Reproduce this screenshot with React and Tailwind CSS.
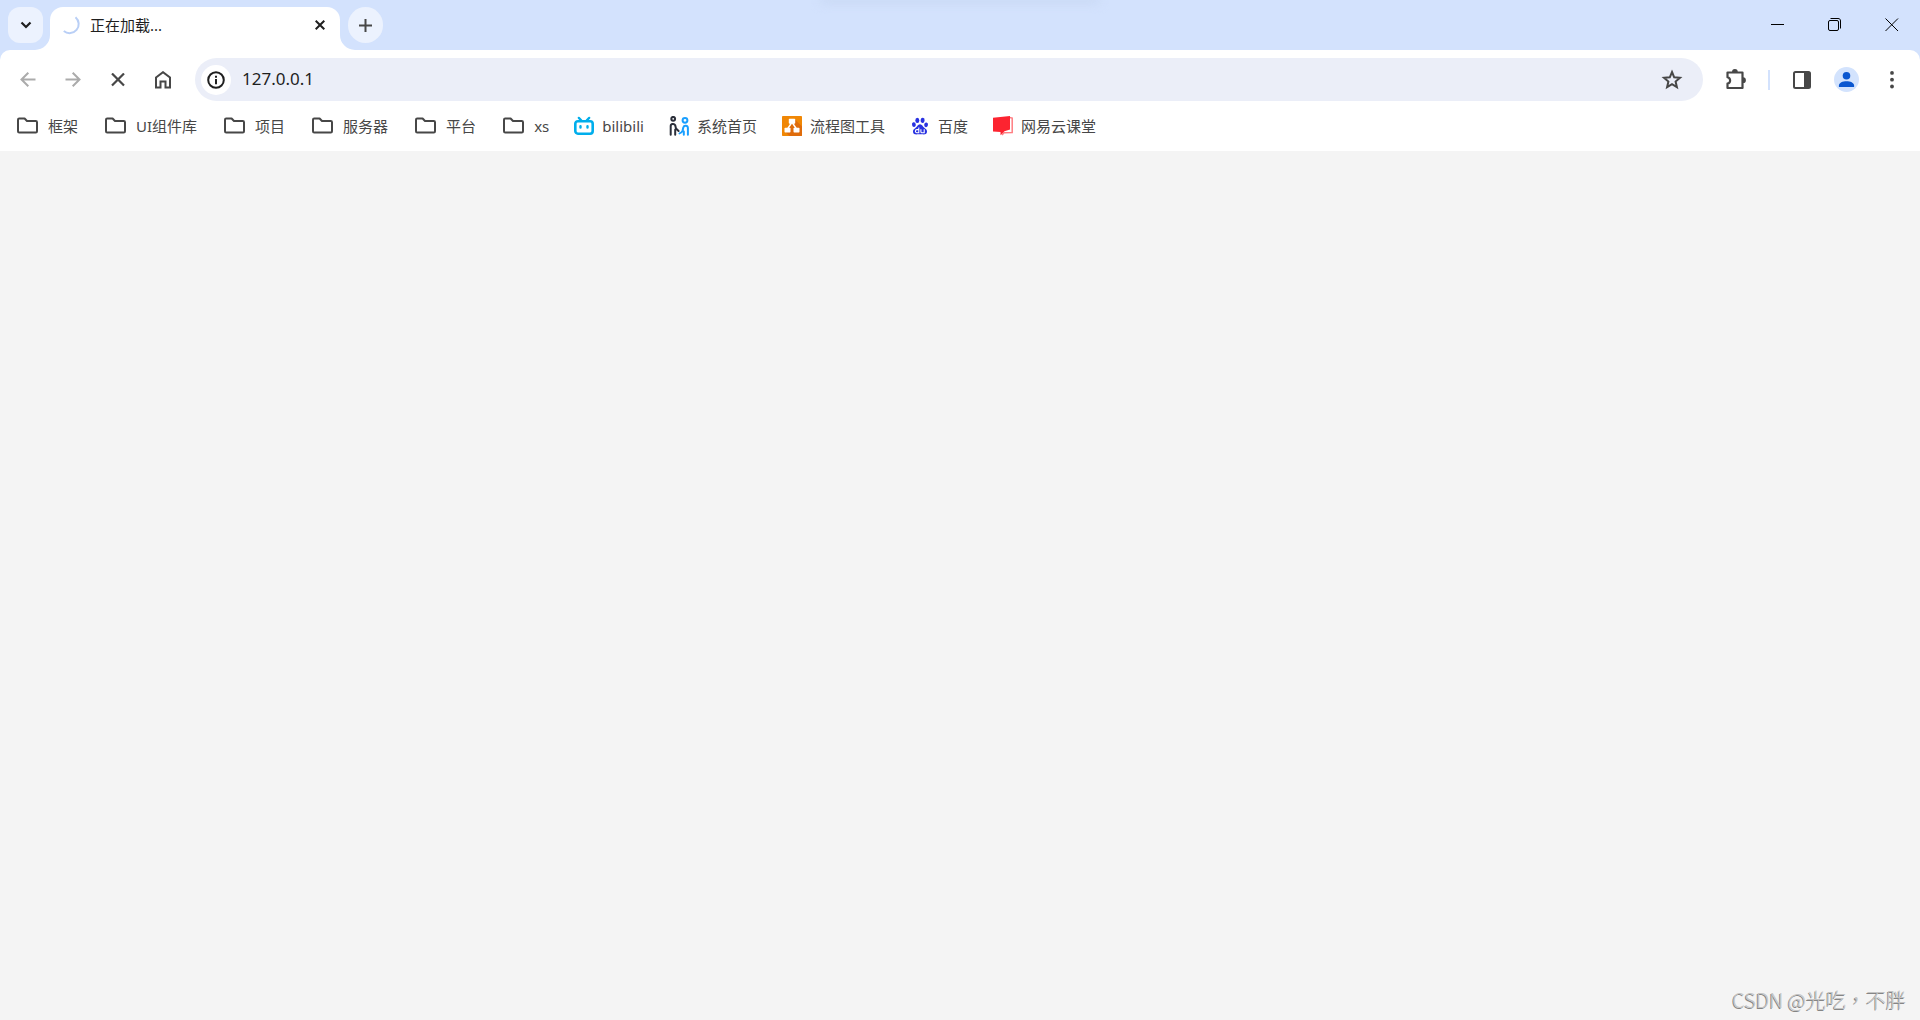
import { useState } from 'react';

const FolderIcon = () => (
  <svg className="size-[25px] shrink-0" viewBox="0 0 25 25" fill="none" stroke="#474747" strokeWidth="2" strokeLinejoin="round" aria-hidden="true">
    <path d="M3 5.700C3 5 3.500 4.500 4.200 4.500H9.600L12 7H20.800C21.500 7 22 7.500 22 8.200V17.300C22 18 21.500 18.500 20.800 18.500H4.200C3.500 18.500 3 18 3 17.300Z" />
  </svg>
);

const BilibiliIcon = () => (
  <svg className="size-5 shrink-0" viewBox="0 0 20 20" fill="none" stroke="#00aeec" strokeLinecap="round" aria-hidden="true">
    <path d="M4.800 1.900L7.200 4.300M15.200 1.900L12.800 4.300" strokeWidth="2.300" />
    <rect x="1.300" y="5.200" width="17.400" height="12.500" rx="2.600" strokeWidth="2.600" />
    <path d="M6.500 10.200V11.600M13.500 10.200V11.600" strokeWidth="2.400" />
  </svg>
);

const PeopleIcon = () => (
  <svg className="size-5 shrink-0" viewBox="0 0 20 20" fill="none" strokeWidth="2" strokeLinecap="round" strokeLinejoin="round" aria-hidden="true">
    <g stroke="#2b2f3a">
      <circle cx="4.200" cy="2.800" r="1.900" />
      <path d="M1.700 18.800V10C1.700 7.600 5.200 7.200 6.200 9.200L7 12.500L9.600 15M6.200 13.500V18.800" />
    </g>
    <g stroke="#1a9fff">
      <circle cx="16" cy="4.300" r="2.400" />
      <path d="M18.900 18.800V12C18.900 9.300 15 9 14.300 11.500L13.600 14.500C13 16.200 11.900 17 10.500 17.400M14.800 15.500V18.800" />
    </g>
  </svg>
);

const DiagramIcon = () => (
  <svg className="size-5 shrink-0" viewBox="0 0 20 20" aria-hidden="true">
    <rect width="20" height="20" rx="0.800" fill="#f08705" />
    <path d="M12.500 3L20 10.500V19.200Q20 20 19.200 20H7.500L3 15.500L10 8Z" fill="#df6c0c" />
    <path d="M9.500 7L5.500 13M10.500 7L14.500 13" stroke="#fff" strokeWidth="1.400" />
    <rect x="6.800" y="2.700" width="6.400" height="5" rx="0.700" fill="#fff" />
    <rect x="2.500" y="11.700" width="6" height="4.800" rx="0.700" fill="#fff" />
    <rect x="11.500" y="11.700" width="6" height="4.800" rx="0.700" fill="#fff" />
  </svg>
);

const BaiduIcon = () => (
  <svg className="size-5 shrink-0" viewBox="0 0 20 20" fill="#2932e1" aria-hidden="true">
    <ellipse cx="7.300" cy="4.400" rx="2" ry="2.600" />
    <ellipse cx="12.600" cy="4.400" rx="2" ry="2.600" transform="rotate(8 12.600 4.400)" />
    <ellipse cx="3.900" cy="8.600" rx="1.900" ry="2.400" transform="rotate(-10 3.900 8.600)" />
    <ellipse cx="16.100" cy="8.800" rx="1.900" ry="2.400" transform="rotate(8 16.100 8.800)" />
    <path d="M10 8.200C12.200 8.200 12.600 10.500 14.300 11.800C16 13.100 17.300 14 17 16C16.600 18.800 14 18.500 12 18.300C10.700 18.100 9.300 18.100 8 18.300C6 18.600 3.300 18.700 3 16C2.800 14 4.100 13 5.700 11.800C7.400 10.500 7.800 8.200 10 8.200Z" />
    <g fill="none" stroke="#fff" strokeWidth="1.100">
      <path d="M8.800 11.600V16.700H6.900C4.900 16.700 4.900 13.600 6.900 13.600H8.800" />
      <path d="M10.900 13.200V15.700C10.900 16.400 11.300 16.700 11.800 16.700H14.200V13.200" />
    </g>
  </svg>
);

const CourseIcon = () => (
  <svg className="size-5 shrink-0" viewBox="0 0 20 20" aria-hidden="true">
    <path d="M16.500 1.500L19.200 2V16.500L11 16.800L9 19" fill="none" stroke="#ff7d82" strokeWidth="1.500" />
    <path d="M0 1.800L17 0V13.500L11.500 15.200L7.500 19.300V16L0 15.600Z" fill="#fc2430" />
  </svg>
);

const bookmarks = [
  { title: '框架', icon: FolderIcon, folder: true },
  { title: 'UI组件库', icon: FolderIcon, folder: true },
  { title: '项目', icon: FolderIcon, folder: true },
  { title: '服务器', icon: FolderIcon, folder: true },
  { title: '平台', icon: FolderIcon, folder: true },
  { title: 'xs', icon: FolderIcon, folder: true },
  { title: 'bilibili', icon: BilibiliIcon },
  { title: '系统首页', icon: PeopleIcon },
  { title: '流程图工具', icon: DiagramIcon },
  { title: '百度', icon: BaiduIcon },
  { title: '网易云课堂', icon: CourseIcon },
];

const ToolbarButton = ({ label, disabled, children }) => (
  <button
    type="button"
    aria-label={label}
    disabled={disabled}
    className="flex h-9 w-[45px] shrink-0 items-center justify-center text-[#474747] disabled:text-[#ababab]"
  >
    {children}
  </button>
);

const WindowButton = ({ label, children }) => (
  <button type="button" aria-label={label} className="flex h-[50px] w-[57px] items-center justify-center text-black">
    <svg className="size-[14px]" viewBox="0 0 14 14" fill="none" stroke="currentColor" strokeWidth="1" aria-hidden="true">
      {children}
    </svg>
  </button>
);

const TabStrip = () => (
  <div className="relative flex h-[50px] overflow-hidden bg-[#d3e2fd]">
    {/* soft shade under the top edge of the window */}
    <div className="pointer-events-none absolute inset-x-0 -top-1 mx-auto h-2 w-[280px] rounded-full bg-[#c9d9f4] blur-[5px]" />
    <button
      type="button"
      aria-label="搜索标签页"
      className="mt-[7px] ml-2 flex h-9 w-[35px] items-center justify-center rounded-xl bg-[#ecf2fe] text-[#1f1f1f]"
    >
      <svg className="size-3" viewBox="0 0 12 12" fill="none" stroke="currentColor" strokeWidth="2.200" aria-hidden="true">
        <path d="M1.500 3.500L6 8L10.500 3.500" />
      </svg>
    </button>
    <div className="relative mt-[7px] ml-[7px] flex h-[43px] w-[290px] items-center rounded-t-[13px] bg-white pr-3 pb-[7px] pl-3">
      <svg className="absolute bottom-0 -left-[15px] size-[15px]" viewBox="0 0 15 15" fill="#fff" aria-hidden="true">
        <path d="M15 0V15H0A15 15 0 0 0 15 0Z" />
      </svg>
      <svg className="absolute -right-[15px] bottom-0 size-[15px]" viewBox="0 0 15 15" fill="#fff" aria-hidden="true">
        <path d="M0 0V15H15A15 15 0 0 1 0 0Z" />
      </svg>
      <svg className="size-5" viewBox="0 0 20 20" fill="none" stroke="#b9cff6" strokeWidth="2" aria-hidden="true">
        <path d="M13.500 2.200A8.300 8.300 0 0 1 1.800 16" />
      </svg>
      <span className="ml-2 flex-1 text-[15px] leading-5 text-[#1f1f1f]">正在加载...</span>
      <button type="button" aria-label="关闭标签页" className="flex size-4 items-center justify-center text-[#1f1f1f]">
        <svg className="size-[10px]" viewBox="0 0 10 10" fill="none" stroke="currentColor" strokeWidth="2" aria-hidden="true">
          <path d="M0.700 0.700L9.300 9.300M9.300 0.700L0.700 9.300" />
        </svg>
      </button>
    </div>
    <button
      type="button"
      aria-label="新标签页"
      className="mt-[7px] ml-2 flex h-9 w-[35px] items-center justify-center rounded-full bg-[#ecf2fe] text-[#474747]"
    >
      <svg className="size-[13px]" viewBox="0 0 13 13" fill="none" stroke="currentColor" strokeWidth="2" aria-hidden="true">
        <path d="M6.500 0V13M0 6.500H13" />
      </svg>
    </button>
    <div className="ml-auto flex">
      <WindowButton label="最小化">
        <path d="M0 6.500H13" />
      </WindowButton>
      <WindowButton label="还原">
        <rect x="0.500" y="2.500" width="10" height="10" rx="1.500" />
        <path d="M2.500 0.500H10C11.700 0.500 12.500 1.300 12.500 3V10.500" />
      </WindowButton>
      <WindowButton label="关闭">
        <path d="M0.500 0.500L13 13M13 0.500L0.500 13" />
      </WindowButton>
    </div>
  </div>
);

const Toolbar = ({ url, onUrlChange }) => (
  <div className="flex items-center pt-2 pr-[6px] pl-[5px]">
    <ToolbarButton label="后退" disabled>
      <svg className="size-4" viewBox="0 0 16 16" fill="none" stroke="currentColor" strokeWidth="2" aria-hidden="true">
        <path d="M15.500 7.500H2M8.300 0.700L1.500 7.500L8.300 14.300" />
      </svg>
    </ToolbarButton>
    <ToolbarButton label="前进" disabled>
      <svg className="size-4" viewBox="0 0 16 16" fill="none" stroke="currentColor" strokeWidth="2" aria-hidden="true">
        <path d="M0.500 7.500H14M7.700 0.700L14.500 7.500L7.700 14.300" />
      </svg>
    </ToolbarButton>
    <ToolbarButton label="停止加载">
      <svg className="size-[14px]" viewBox="0 0 14 14" fill="none" stroke="currentColor" strokeWidth="2.200" aria-hidden="true">
        <path d="M1 0.500L13 12.500M13 0.500L1 12.500" />
      </svg>
    </ToolbarButton>
    <ToolbarButton label="主页">
      <svg className="h-[18px] w-4" viewBox="0 0 16 18" fill="none" stroke="currentColor" strokeWidth="2" aria-hidden="true">
        <path d="M1 6.500L8 1.200L15 6.500V16.500H10.500V10.500H5.500V16.500H1Z" />
      </svg>
    </ToolbarButton>

    <div className="ml-[10px] flex h-[43px] min-w-0 flex-1 items-center rounded-full bg-[#ebeef8] pr-[6px] pl-[6px]">
      <button type="button" aria-label="查看网站信息" className="flex size-[30px] shrink-0 items-center justify-center rounded-full bg-white text-[#1f1f1f]">
        <svg className="size-[18px]" viewBox="0 0 18 18" fill="none" stroke="currentColor" strokeWidth="2" aria-hidden="true">
          <circle cx="9" cy="9" r="7.800" />
          <path d="M9 8V13.200M9 4.800V6.800" />
        </svg>
      </button>
      <input
        type="text"
        aria-label="地址和搜索栏"
        value={url}
        onChange={(e) => onUrlChange(e.target.value)}
        className="ml-[11px] h-8 min-w-0 flex-1 bg-transparent pb-[2px] text-[17px] text-[#1f1f1f] outline-none"
      />
      <button type="button" aria-label="为此标签页添加书签" className="flex h-9 w-[50px] shrink-0 items-center justify-center text-[#474747]">
        <svg className="size-6" viewBox="0 0 24 24" fill="none" stroke="currentColor" strokeWidth="2" aria-hidden="true">
          <path d="M12 4L14.200 9.300L20 9.800L15.600 13.600L16.900 19.200L12 16.200L7.100 19.200L8.400 13.600L4 9.800L9.800 9.300Z" />
        </svg>
      </button>
    </div>

    <div className="ml-[10px] flex items-center">
      <ToolbarButton label="扩展程序">
        <svg className="size-[22px]" viewBox="0 0 22 22" aria-hidden="true">
          <path d="M2.500 3.500H17.500V19H2.500V14.600C6 13.800 6 9 2.500 8.200Z" fill="none" stroke="currentColor" strokeWidth="2.200" strokeLinejoin="round" />
          <path d="M7 3A2.900 2.900 0 0 1 12.800 3ZM18 8.300A2.900 2.900 0 0 1 18 14.100Z" fill="currentColor" />
        </svg>
      </ToolbarButton>
      <div className="flex w-[21px] justify-center">
        <div className="h-5 w-[2px] bg-[#d3e2fd]" />
      </div>
      <ToolbarButton label="显示侧边栏">
        <svg className="size-[18px]" viewBox="0 0 18 18" aria-hidden="true">
          <rect x="1" y="1" width="16" height="16" rx="1.500" fill="none" stroke="currentColor" strokeWidth="2" />
          <path d="M11 1H17V17H11Z" fill="currentColor" />
        </svg>
      </ToolbarButton>
      <ToolbarButton label="个人资料">
        <svg className="size-[25px]" viewBox="0 0 25 25" fill="#0b57d0" aria-hidden="true">
          <circle cx="12.500" cy="12.500" r="12.500" fill="#d3e3fd" />
          <circle cx="12.500" cy="8.800" r="3.800" />
          <path d="M4.900 20V18.500C4.900 15.700 8.800 14.200 12.500 14.200C16.200 14.200 20.100 15.700 20.100 18.500V20Z" />
        </svg>
      </ToolbarButton>
      <ToolbarButton label="自定义及控制">
        <svg className="size-[18px]" viewBox="0 0 18 18" fill="currentColor" aria-hidden="true">
          <circle cx="9" cy="1.900" r="1.900" />
          <circle cx="9" cy="8.700" r="1.900" />
          <circle cx="9" cy="15.500" r="1.900" />
        </svg>
      </ToolbarButton>
    </div>
  </div>
);

const BookmarkBar = () => (
  <nav aria-label="书签栏" className="flex h-[50px] items-center gap-[25px] pl-[15px] text-[15px] leading-5 text-[#474747]">
    {bookmarks.map(({ title, icon: Icon, folder }) =>
      folder ? (
        <button key={title} type="button" className="flex shrink-0 items-center gap-2">
          <Icon />
          {title}
        </button>
      ) : (
        <a key={title} href="#" className="flex shrink-0 items-center gap-2">
          <Icon />
          {title}
        </a>
      )
    )}
  </nav>
);

const App = () => {
  const [url, setUrl] = useState('127.0.0.1');

  return (
    <div className="flex min-h-screen flex-col bg-[#f4f4f4] font-['Noto_Sans','Noto_Sans_CJK_SC',sans-serif]">
      <header className="bg-[#d3e2fd]">
        <TabStrip />
        <div className="rounded-t-[10px] bg-white">
          <Toolbar url={url} onUrlChange={setUrl} />
          <BookmarkBar />
        </div>
      </header>
      <main className="flex-1" />
      <footer className="flex justify-end pr-[14px] pb-[6px] font-['Noto_Sans_CJK_TC',sans-serif] text-[20px] leading-7 font-light text-[#c4c4c4] [text-shadow:-1px_1px_0_#858585]">
        CSDN @光吃，不胖
      </footer>
    </div>
  );
};

export default App;
